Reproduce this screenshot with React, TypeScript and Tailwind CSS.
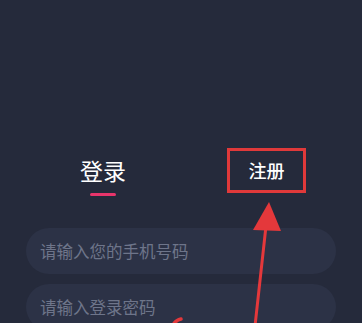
export default function App() {
  return (
    <div
      className="relative w-[362px] h-[323px] overflow-hidden bg-[#252a3b]"
      style={{ fontFamily: '"Noto Sans CJK SC", "Noto Sans", sans-serif' }}
    >
      <div className="pt-[148px] px-[26px]">
        <div className="flex items-start h-[45px]">
          <div className="w-[154px] flex flex-col items-center">
            <span className="mt-[8px] text-[23px] leading-[28px] text-white">登录</span>
            <span className="mt-[9px] w-[26px] h-[3px] rounded-full bg-[#e8356b]" />
          </div>
          <div className="ml-[47px] w-[79px] h-[45px] border-[3px] border-[#e0393a] flex items-center justify-center">
            <span className="text-[18px] font-medium text-white">注册</span>
          </div>
        </div>

        <div className="mt-[35px] h-[46px] rounded-full bg-[#2c3246] flex items-center pl-[14px]">
          <span className="text-[16.5px] text-[#6e758a]">请输入您的手机号码</span>
        </div>
        <div className="mt-[10px] h-[46px] rounded-full bg-[#2c3246] flex items-center pl-[14px]">
          <span className="text-[16.5px] text-[#6e758a]">请输入登录密码</span>
        </div>
      </div>

      {/* annotation arrows */}
      <svg className="absolute inset-0" width="362" height="323" viewBox="0 0 362 323">
        <line x1="255" y1="326" x2="266" y2="226" stroke="#e4383b" strokeWidth="3" strokeLinecap="round" />
        <polygon points="269,202 253,230 281,231" fill="#e4383b" />
        <path d="M173 325 Q176 320 181 319" stroke="#e4383b" strokeWidth="3.5" fill="none" strokeLinecap="round" />
      </svg>
    </div>
  )
}
